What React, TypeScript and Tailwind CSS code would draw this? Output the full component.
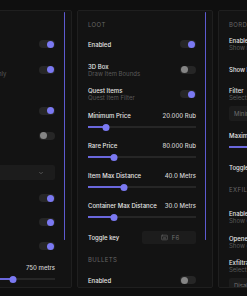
import React from 'react';
import { Keyboard, ChevronDown } from 'lucide-react';

const Toggle = ({ on }: { on: boolean }) => (
  <div className="relative w-[16px] h-[8px] rounded-full bg-[#262626] shrink-0">
    <div
      className={
        on
          ? 'absolute right-[1px] top-[0.5px] w-[7px] h-[7px] rounded-full bg-[#7b79f2]'
          : 'absolute left-[1px] top-[0.5px] w-[7px] h-[7px] rounded-full bg-[#858585]'
      }
    />
  </div>
);

const Slider = ({ pct }: { pct: number }) => (
  <div className="relative h-[8px] flex items-center">
    <div className="h-[1.5px] w-full bg-[#262626]" />
    <div className="absolute left-0 h-[1.5px] bg-[#6a67dc]" style={{ width: `${pct}%` }} />
    <div
      className="absolute w-[7px] h-[7px] rounded-full bg-[#7b79f2] -translate-x-1/2"
      style={{ left: `${pct}%` }}
    />
  </div>
);

const Header = ({ title, h }: { title: string; h: string }) => (
  <div className={`flex items-center text-[6px] tracking-[0.4px] text-[#666] uppercase ${h}`}>{title}</div>
);

const ToggleRow = ({ label, desc, on, h }: { label: string; desc?: string; on: boolean; h: string }) => (
  <div className={`flex items-center justify-between ${h}`}>
    <div className="flex flex-col">
      <span className="text-[6px] leading-[7px] font-medium text-[#e6e6e6]">{label}</span>
      {desc && <span className="text-[6px] leading-[7px] text-[#5a5a5a]">{desc}</span>}
    </div>
    <Toggle on={on} />
  </div>
);

const SliderRow = ({ label, value, pct }: { label: string; value: string; pct: number }) => (
  <div className="flex flex-col h-[30px] pt-[5px]">
    <div className="flex items-center justify-between h-[8px]">
      <span className="text-[6px] font-medium text-[#e6e6e6]">{label}</span>
      <span className="text-[6px] font-medium text-[#d4d4d4]">{value}</span>
    </div>
    <div className="mt-[4px]">
      <Slider pct={pct} />
    </div>
  </div>
);

const KeyRow = ({ h }: { h: string }) => (
  <div className={`flex items-center justify-between ${h}`}>
    <span className="text-[6px] font-medium text-[#e6e6e6]">Toggle key</span>
    <div className="w-[54px] h-[13px] rounded-[2px] bg-[#1c1c1c] flex items-center justify-center gap-[4px] pl-[2px] text-[#6f6f6f]">
      <Keyboard size={7} strokeWidth={1.8} />
      <span className="text-[6px]">F6</span>
    </div>
  </div>
);

const Panel = ({ children }: { children: React.ReactNode }) => (
  <div className="relative w-[136px] h-[278px] shrink-0 overflow-hidden border border-[#1f1f1f] bg-[#131313] rounded-[2px] pl-[10px] pr-[16px] pt-[6px]">
    {children}
    <div className="absolute right-[6px] top-[1px] w-[1.5px] h-[228px] bg-[#5d5ad0] rounded-full" />
  </div>
);

export default function App() {
  return (
    <div
      className="w-full h-screen overflow-hidden bg-[#0f0f0f] pt-[10px]"
      style={{ fontFamily: 'Inter, "Noto Sans", sans-serif' }}
    >
      <div className="flex gap-[5px] ml-[-64px]">
        <Panel>
          <Header title="Players" h="h-[14px]" />
          <ToggleRow label="Enabled" on h="h-[26px]" />
          <ToggleRow label="Teammates" desc="Show teammate only" on h="h-[25px]" />
          <Header title="Visuals" h="h-[16px]" />
          <ToggleRow label="Boxes" on h="h-[25px]" />
          <ToggleRow label="Skeleton" on={false} h="h-[25px]" />
          <div className="h-[14px] flex items-center text-[6px] font-medium text-[#e6e6e6]">Render mode</div>
          <div className="mt-[3px] h-[15px] rounded-[2px] bg-[#1c1c1c] flex items-center justify-between pl-[5px] pr-[11px] text-[6px] text-[#8a8a8a]">
            <span>Full body</span>
            <ChevronDown size={6} strokeWidth={2} />
          </div>
          <div className="h-[6px]" />
          <ToggleRow label="Names" on h="h-[24px]" />
          <ToggleRow label="Health" on h="h-[24px]" />
          <ToggleRow label="Weapons" on h="h-[24px]" />
          <SliderRow label="Max Distance" value="750 metrs" pct={61} />
        </Panel>

        <Panel>
          <Header title="Loot" h="h-[14px]" />
          <ToggleRow label="Enabled" on h="h-[26px]" />
          <ToggleRow label="3D Box" desc="Draw Item Bounds" on={false} h="h-[25px]" />
          <ToggleRow label="Quest Items" desc="Quest Item Filter" on h="h-[24px]" />
          <SliderRow label="Minimum Price" value="20.000 Rub" pct={16.5} />
          <SliderRow label="Rare Price" value="80.000 Rub" pct={24.5} />
          <SliderRow label="Item Max Distance" value="40.0 Metrs" pct={33.5} />
          <SliderRow label="Container Max Distance" value="30.0 Metrs" pct={24.5} />
          <KeyRow h="h-[22px]" />
          <Header title="Bullets" h="h-[22px]" />
          <ToggleRow label="Enabled" on={false} h="h-[20px]" />
        </Panel>

        <Panel>
          <Header title="Borders" h="h-[14px]" />
          <ToggleRow label="Enabled" desc="Show map borders" on h="h-[26px]" />
          <ToggleRow label="Show Distance" on h="h-[25px]" />
          <div className="h-[24px] flex flex-col justify-center">
            <span className="text-[6px] leading-[7px] font-medium text-[#e6e6e6]">Filter</span>
            <span className="text-[6px] leading-[7px] text-[#5a5a5a]">Select a border type</span>
          </div>
          <div className="flex gap-[3px] h-[15px]">
            <div className="flex-1 rounded-[2px] bg-[#1c1c1c] flex items-center pl-[5px] text-[6px] text-[#6f6f6f]">Minimal</div>
            <div className="flex-1 rounded-[2px] bg-[#1c1c1c] flex items-center justify-center text-[6px] text-[#6f6f6f]">Full</div>
          </div>
          <div className="h-[5px]" />
          <SliderRow label="Maximum Distance" value="300 metrs" pct={40} />
          <KeyRow h="h-[22px]" />
          <Header title="Exfiltrations" h="h-[22px]" />
          <div className="h-[4px]" />
          <ToggleRow label="Enabled" desc="Show exfil points" on h="h-[26px]" />
          <ToggleRow label="Opened Only" desc="Show only opened" on h="h-[24px]" />
          <div className="h-[24px] flex flex-col justify-center">
            <span className="text-[6px] leading-[7px] font-medium text-[#e6e6e6]">Exfiltration type</span>
            <span className="text-[6px] leading-[7px] text-[#5a5a5a]">Select exfil type</span>
          </div>
          <div className="flex gap-[3px] h-[14px]">
            <div className="flex-1 rounded-[2px] bg-[#1c1c1c] flex items-center pl-[5px] text-[6px] text-[#6f6f6f]">Disabled</div>
            <div className="flex-1 rounded-[2px] bg-[#1c1c1c] flex items-center justify-center text-[6px] text-[#6f6f6f]">All</div>
          </div>
        </Panel>
      </div>
    </div>
  );
}
